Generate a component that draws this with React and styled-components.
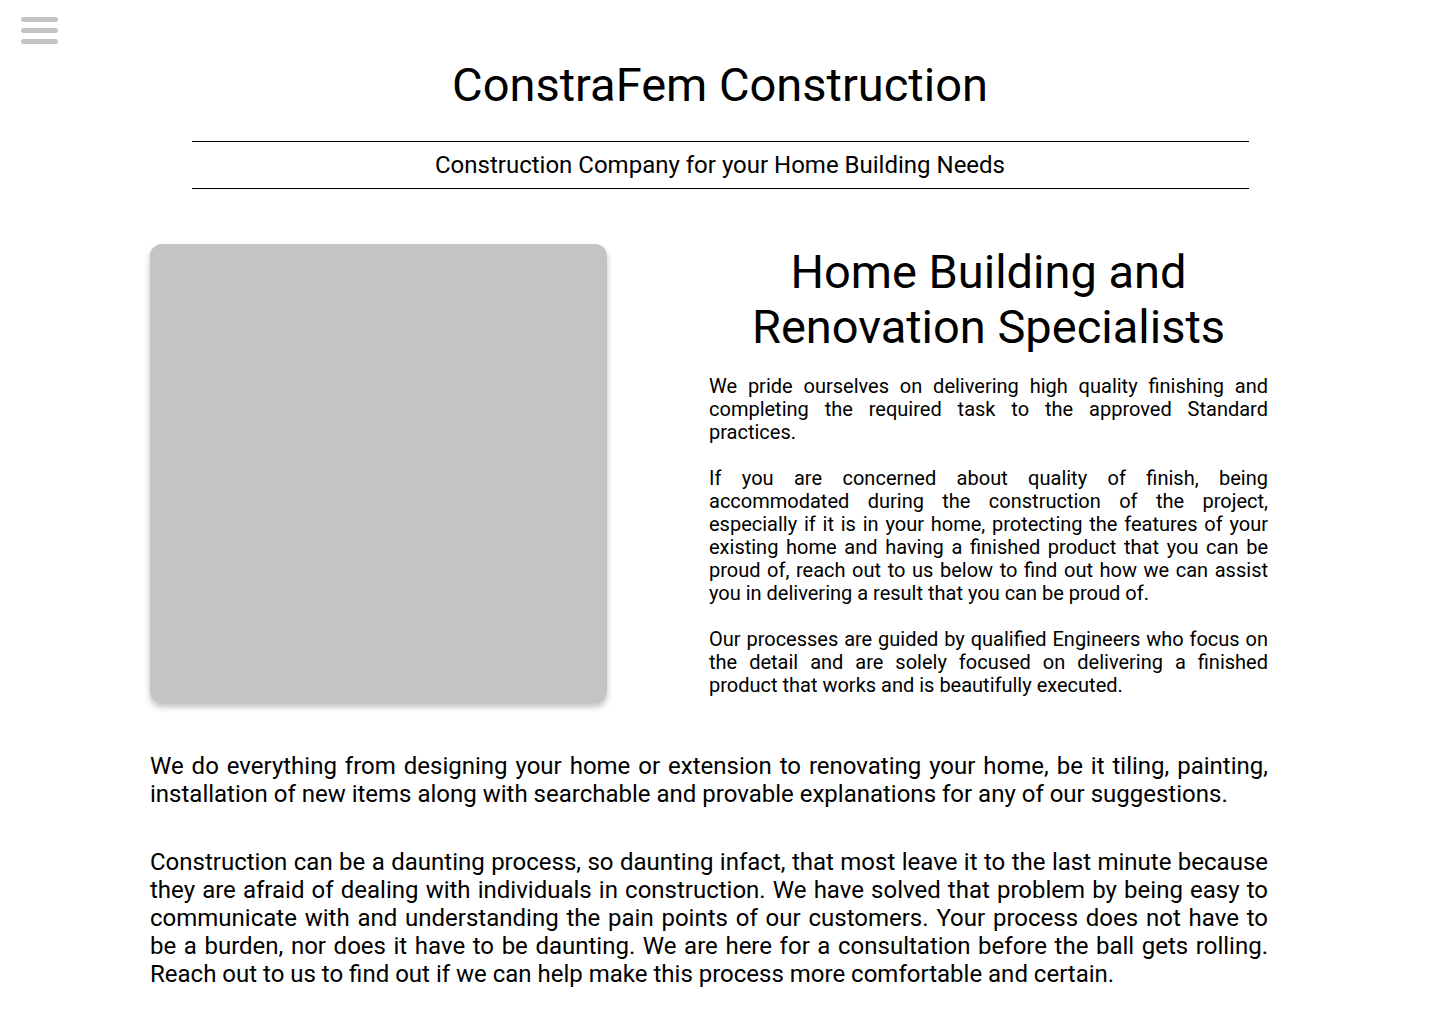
import React from "react";
import styled, { createGlobalStyle } from "styled-components";

const GlobalStyle = createGlobalStyle`
  html, body {
    margin: 0;
    padding: 0;
    background: #ffffff;
    font-family: Roboto, "Noto Sans", sans-serif;
    color: #000;
  }
`;

const Page = styled.div`
  position: relative;
  width: 1440px;
  min-height: 1024px;
  padding-top: 56px;
  box-sizing: border-box;
`;

const MenuButton = styled.button`
  position: absolute;
  top: 17px;
  left: 21px;
  width: 37px;
  height: 27px;
  padding: 0;
  border: none;
  background: transparent;
  display: flex;
  flex-direction: column;
  justify-content: space-between;
  cursor: pointer;
`;

const MenuBar = styled.span`
  display: block;
  height: 5px;
  width: 100%;
  border-radius: 3px;
  background: #c4c4c4;
`;

const Header = styled.header`
  width: 1057px;
  margin: 0 auto;
  text-align: center;
`;

const Title = styled.h1`
  margin: 0;
  font-size: 47px;
  font-weight: 400;
  line-height: 58px;
`;

const Tagline = styled.p`
  margin: 27px 0 0;
  border-top: 1px solid #000;
  border-bottom: 1px solid #000;
  font-size: 24px;
  line-height: 46px;
`;

const Content = styled.main`
  width: 1118px;
  margin-left: 150px;
`;

const Feature = styled.section`
  margin-top: 55px;
  display: flex;
  gap: 102px;
  align-items: flex-start;
`;

const ImageBox = styled.div`
  flex: 0 0 457px;
  height: 459px;
  border-radius: 12px;
  background: #c4c4c4;
  box-shadow: 0 4px 6px rgba(0, 0, 0, 0.25);
`;

const Copy = styled.div`
  flex: 1;
`;

const Heading = styled.h2`
  margin: 0 0 21px;
  text-align: center;
  font-size: 47px;
  font-weight: 400;
  line-height: 55px;
`;

const SmallText = styled.p`
  margin: 0 0 23px;
  font-size: 20px;
  line-height: 23px;
  text-align: justify;
  &:last-child {
    margin-bottom: 0;
  }
`;

const LargeText = styled.p`
  margin: ${(p) => p.$top || 0}px 0 0;
  font-size: 24px;
  line-height: 28px;
  text-align: justify;
`;

export default function App() {
  return (
    <>
      <GlobalStyle />
      <Page>
        <MenuButton aria-label="menu">
          <MenuBar />
          <MenuBar />
          <MenuBar />
        </MenuButton>
        <Header>
          <Title>ConstraFem Construction</Title>
          <Tagline>Construction Company for your Home Building Needs</Tagline>
        </Header>
        <Content>
          <Feature>
            <ImageBox />
            <Copy>
              <Heading>
                Home Building and
                <br />
                Renovation Specialists
              </Heading>
              <SmallText>
                We pride ourselves on delivering high quality finishing and
                completing the required task to the approved Standard practices.
              </SmallText>
              <SmallText>
                If you are concerned about quality of finish, being accommodated
                during the construction of the project, especially if it is in
                your home, protecting the features of your existing home and
                having a finished product that you can be proud of, reach out to
                us below to find out how we can assist you in delivering a result
                that you can be proud of.
              </SmallText>
              <SmallText>
                Our processes are guided by qualified Engineers who focus on the
                detail and are solely focused on delivering a finished product
                that works and is beautifully executed.
              </SmallText>
            </Copy>
          </Feature>
          <LargeText $top={49}>
            We do everything from designing your home or extension to renovating
            your home, be it tiling, painting, installation of new items along
            with searchable and provable explanations for any of our suggestions.
          </LargeText>
          <LargeText $top={40}>
            Construction can be a daunting process, so daunting infact, that most
            leave it to the last minute because they are afraid of dealing with
            individuals in construction. We have solved that problem by being
            easy to communicate with and understanding the pain points of our
            customers. Your process does not have to be a burden, nor does it
            have to be daunting. We are here for a consultation before the ball
            gets rolling. Reach out to us to find out if we can help make this
            process more comfortable and certain.
          </LargeText>
        </Content>
      </Page>
    </>
  );
}
